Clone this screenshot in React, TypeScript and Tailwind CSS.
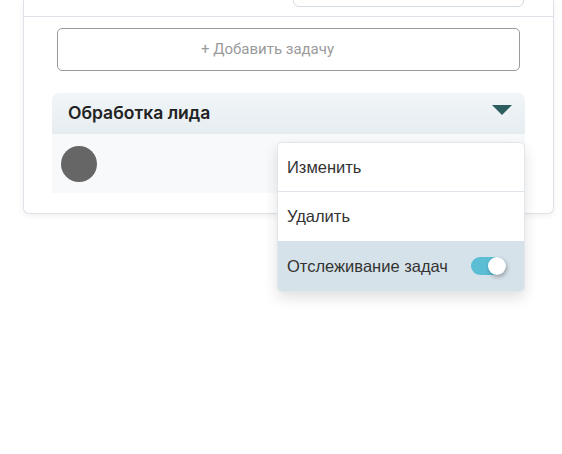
import React from "react";

function Toggle({ on }: { on: boolean }) {
  return (
    <span
      className={`relative inline-flex h-[18px] w-[35px] items-center rounded-full ${
        on ? "bg-[#5bbed5]" : "bg-gray-300"
      }`}
    >
      <span
        className={`absolute top-0 h-[18px] w-[18px] rounded-full bg-white shadow-[1px_2px_4px_rgba(0,0,0,0.3)] ${
          on ? "right-0" : "left-0"
        }`}
      />
    </span>
  );
}

function ItemMenu() {
  return (
    <div className="absolute right-0 top-2 z-10 w-[248px] overflow-hidden rounded-[5px] border border-[#e1e6ea] bg-white shadow-[0_6px_14px_rgba(0,0,0,0.12)] font-['Liberation_Sans',Arial,sans-serif] text-[16.5px] text-[#333]">
      <div className="flex h-[49px] items-center border-b border-[#dfe5ea] px-[9px]">
        Изменить
      </div>
      <div className="flex h-[49px] items-center px-[9px]">Удалить</div>
      <div className="flex h-[50px] items-center justify-between bg-[#d6e2e9] pl-[9px] pr-[18px]">
        <span>Отслеживание задач</span>
        <Toggle on />
      </div>
    </div>
  );
}

export default function App() {
  return (
    <div className="min-h-screen bg-white font-['Roboto',sans-serif]">
      <div className="ml-[23px] w-[531px] rounded-b-[6px] border border-t-0 border-[#dde3e8] bg-white pb-5 shadow-[0_2px_6px_rgba(0,0,0,0.06)]">
        <div className="flex h-[17px] justify-end border-b border-[#dde3e8] pr-[29px]">
          <div className="-mt-[23px] h-[30px] w-[231px] rounded-[6px] border border-[#d5dce2] bg-white" />
        </div>

        <div className="pl-[28px] pr-[28px]">
          <div className="px-[5px] pt-[11px]">
            <button className="flex h-[43px] w-full items-center justify-center rounded-[5px] border border-[#9a9a9a] bg-white pr-[42px] text-[15px] text-[#9a9a9a]">
              + Добавить задачу
            </button>
          </div>

          <div className="mt-[22px] flex h-[41px] items-center justify-between rounded-t-[7px] bg-gradient-to-b from-[#f1f5f8] to-[#e6edf1] pl-4 pr-[13px]">
            <span className="font-['Inter',sans-serif] text-[17.5px] font-semibold text-[#222]">
              Обработка лида
            </span>
            <svg width="20" height="10" viewBox="0 0 20 10" className="-mt-2">
              <path d="M0 0h20L10 10z" fill="#2d5d5e" />
            </svg>
          </div>

          <div className="relative flex h-[59px] items-center bg-[#f7f9fb] pl-[9px]">
            <div className="h-9 w-9 rounded-full bg-[#666]" />
            <ItemMenu />
          </div>
        </div>
      </div>
    </div>
  );
}
